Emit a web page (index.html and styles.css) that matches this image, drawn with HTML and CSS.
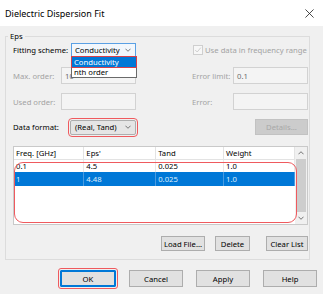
FILE: index.html
```html
<!DOCTYPE html>
<html lang="en">
<head>
  <meta charset="UTF-8" />
  <title>Dielectric Dispersion Fit</title>
  <link rel="stylesheet" href="styles.css">
</head>
<body>
  <div class="dialog">
    <div class="titlebar">
      <span class="title">Dielectric Dispersion Fit</span>
      <svg class="close" viewBox="0 0 10 10"><path d="M0.5 0.5 L9.5 9.5 M9.5 0.5 L0.5 9.5" /></svg>
    </div>

    <div class="content">
      <fieldset class="group">
        <legend>Eps</legend>

        <div class="row row-scheme">
          <div class="half">
            <span>Fitting scheme:</span>
            <div class="combo scheme focused">
              <span>Conductivity</span>
              <svg class="chev" viewBox="0 0 7 4"><path d="M0.5 0.5 L3.5 3.5 L6.5 0.5" /></svg>
              <ul class="dropdown">
                <li class="active">Conductivity</li>
                <li>nth order</li>
              </ul>
            </div>
          </div>
          <div class="half right start">
            <span class="check"><svg viewBox="0 0 10 10"><path d="M1.5 5 L4 7.5 L8.5 2" /></svg></span>
            <span class="muted">Use data in frequency range</span>
          </div>
        </div>

        <div class="row row-field">
          <div class="half">
            <span class="muted">Max. order:</span>
            <div class="field">10</div>
          </div>
          <div class="half right">
            <span class="muted">Error limit:</span>
            <div class="field">0.1</div>
          </div>
        </div>

        <div class="row row-field">
          <div class="half">
            <span class="muted">Used order:</span>
            <div class="field"></div>
          </div>
          <div class="half right">
            <span class="muted">Error:</span>
            <div class="field"></div>
          </div>
        </div>

        <div class="row row-format">
          <div class="half">
            <span>Data format:</span>
            <div class="combo format marked">
              <span>(Real, Tand)</span>
              <svg class="chev" viewBox="0 0 7 4"><path d="M0.5 0.5 L3.5 3.5 L6.5 0.5" /></svg>
            </div>
          </div>
          <div class="half right end">
            <button class="btn details" disabled>Details...</button>
          </div>
        </div>

        <div class="list">
          <table class="grid">
            <colgroup>
              <col class="c1"><col class="c2"><col class="c3"><col class="c4">
            </colgroup>
            <thead>
              <tr><th>Freq. [GHz]</th><th>Eps'</th><th>Tand</th><th>Weight</th></tr>
            </thead>
            <tbody>
              <tr class="r1"><td>0.1</td><td>4.5</td><td>0.025</td><td>1.0</td></tr>
              <tr class="r2 selected"><td>1</td><td>4.48</td><td>0.025</td><td>1.0</td></tr>
            </tbody>
          </table>
          <div class="scrollbar">
            <svg class="arrow" viewBox="0 0 7 4"><path d="M0.5 3.5 L3.5 0.5 L6.5 3.5" /></svg>
            <div class="thumb"></div>
            <svg class="arrow" viewBox="0 0 7 4"><path d="M0.5 0.5 L3.5 3.5 L6.5 0.5" /></svg>
          </div>
          <div class="mark"></div>
        </div>

        <div class="list-actions">
          <button class="btn load">Load File...</button>
          <button class="btn delete">Delete</button>
          <button class="btn clear">Clear List</button>
        </div>
      </fieldset>

      <div class="actions">
        <button class="btn ok">OK</button>
        <button class="btn">Cancel</button>
        <button class="btn">Apply</button>
        <button class="btn">Help</button>
      </div>
    </div>
  </div>
</body>
</html>
```

FILE: styles.css
```css
* {
  box-sizing: border-box;
}

body {
  margin: 0;
  font-family: "Noto Sans", sans-serif;
  font-size: 7.7px;
  color: #000;
  background: #f0f0f0;
}

.dialog {
  width: 323px;
  height: 294px;
  background: #f0f0f0;
}

.titlebar {
  height: 26px;
  background: #fff;
  display: flex;
  align-items: center;
  justify-content: space-between;
  padding: 0 9px 0 5px;
}

.title {
  font-size: 9px;
}

.close {
  width: 9px;
  height: 9px;
  fill: none;
  stroke: #222;
  stroke-width: 0.9;
}

.content {
  padding: 4px 0 0 5px;
}

.group {
  margin: 0;
  min-width: 0;
  width: 305px;
  border: 1px solid #dcdcdc;
  padding: 1px 1px 8px 7px;
}

.group legend {
  padding: 0 2px;
  margin-left: -5px;
  line-height: 12px;
}

.row {
  display: flex;
  justify-content: space-between;
  align-items: center;
}

.row-scheme { height: 14px; }
.row-field { height: 17px; margin-top: 10px; }
.row-field + .row-field { margin-top: 9px; }
.row-format { height: 16px; margin-top: 9px; }

.half {
  display: flex;
  align-items: center;
  justify-content: space-between;
  width: 123px;
  height: 100%;
}

.half.right {
  width: 116px;
}

.half.start {
  justify-content: flex-start;
  padding-left: 1px;
}

.half.end {
  justify-content: flex-end;
}

.muted {
  color: #a3a3a3;
}

.check {
  width: 10px;
  height: 10px;
  border: 1px solid #cfcfcf;
  background: #f7f7f7;
  margin-right: 2px;
  display: flex;
}

.check svg {
  width: 8px;
  height: 8px;
  fill: none;
  stroke: #c4c4c4;
  stroke-width: 1;
}

.field {
  width: 75px;
  height: 17px;
  border: 1px solid #d2d2d2;
  background: #f4f4f4;
  color: #6e6e6e;
  padding: 0 3px;
  display: flex;
  align-items: center;
}

.combo {
  position: relative;
  height: 15px;
  display: flex;
  align-items: center;
  justify-content: space-between;
  padding: 0 4px 0 3px;
  border: 1px solid #adadad;
  background: #e5e5e5;
}

.combo.scheme {
  width: 65px;
  height: 14px;
}

.combo.focused {
  border-color: #5aa0e4;
  background: #f2f7fc;
}

.combo.format {
  width: 66px;
  padding-left: 4px;
}

.chev {
  width: 6px;
  height: 4px;
  fill: none;
  stroke: #555;
  stroke-width: 0.9;
}

.marked {
  outline: 1.3px solid #ef5a5e;
  outline-offset: 1px;
  border-radius: 2px;
}

.dropdown {
  position: absolute;
  top: 100%;
  left: -1px;
  width: 66px;
  margin: 0;
  padding: 0;
  list-style: none;
  background: #fff;
  border: 1px solid #6a6a6a;
  z-index: 10;
}

.dropdown li {
  height: 10px;
  line-height: 10px;
  padding-left: 2px;
}

.dropdown li.active {
  background: #0078d7;
  color: #fff;
  outline: 1.2px solid #d6404a;
}

.btn {
  font-family: inherit;
  font-size: inherit;
  color: #000;
  height: 15px;
  padding: 0;
  border: 1px solid #adadad;
  background: #e1e1e1;
}

.btn.details {
  width: 53px;
  height: 16px;
  color: #a8a8a8;
  background: #cccccc;
  border-color: #c2c2c2;
}

.list {
  position: relative;
  margin-top: 11px;
  height: 79px;
  width: 295px;
  display: flex;
  border: 1px solid #c9c9c9;
  background: #fff;
}

.grid {
  flex: 1;
  align-self: flex-start;
  border-collapse: collapse;
  table-layout: fixed;
}

.grid .c1 { width: 70px; }
.grid .c2 { width: 72px; }
.grid .c3 { width: 68px; }
.grid .c4 { width: 71px; }

.grid th {
  height: 12px;
  font-weight: normal;
  text-align: left;
  padding: 0 2px;
  border-right: 1px solid #e3e3e3;
  border-bottom: 1px solid #e3e3e3;
}

.grid td {
  padding: 0 2px;
  border-right: 1px solid #e8e8e8;
}

.grid .r1 td {
  height: 13px;
}

.grid .r2 td {
  height: 14px;
}

.grid .selected td {
  background: #0078d7;
  color: #dfeefb;
  border-right-color: #4a9be0;
}

.scrollbar {
  width: 12px;
  display: flex;
  flex-direction: column;
  align-items: center;
  background: #f0f0f0;
  padding: 4px 0 4px;
}

.scrollbar .arrow {
  width: 6px;
  height: 4px;
  fill: none;
  stroke: #606060;
  stroke-width: 1;
}

.thumb {
  width: 10px;
  height: 53px;
  margin: 4px 0 auto;
  background: #cdcdcd;
}

.mark {
  position: absolute;
  left: 0;
  top: 15px;
  width: 283px;
  height: 61px;
  border: 1.3px solid #ef5a5e;
  border-radius: 9px;
}

.list-actions {
  display: flex;
  justify-content: flex-end;
  margin-top: 11px;
}

.btn.load { width: 44px; margin-right: 10px; }
.btn.delete { width: 35px; margin-right: 16px; }
.btn.clear { width: 42px; }

.actions {
  display: flex;
  gap: 13px;
  padding-left: 55px;
  margin-top: 10px;
}

.actions .btn {
  width: 54px;
  height: 17px;
}

.actions .btn.ok {
  width: 56px;
  border: 1px solid #0078d7;
  box-shadow: inset 0 0 0 1px #0078d7;
  outline: 1.3px solid #ef5a5e;
  outline-offset: 1px;
  border-radius: 1px;
}
```
